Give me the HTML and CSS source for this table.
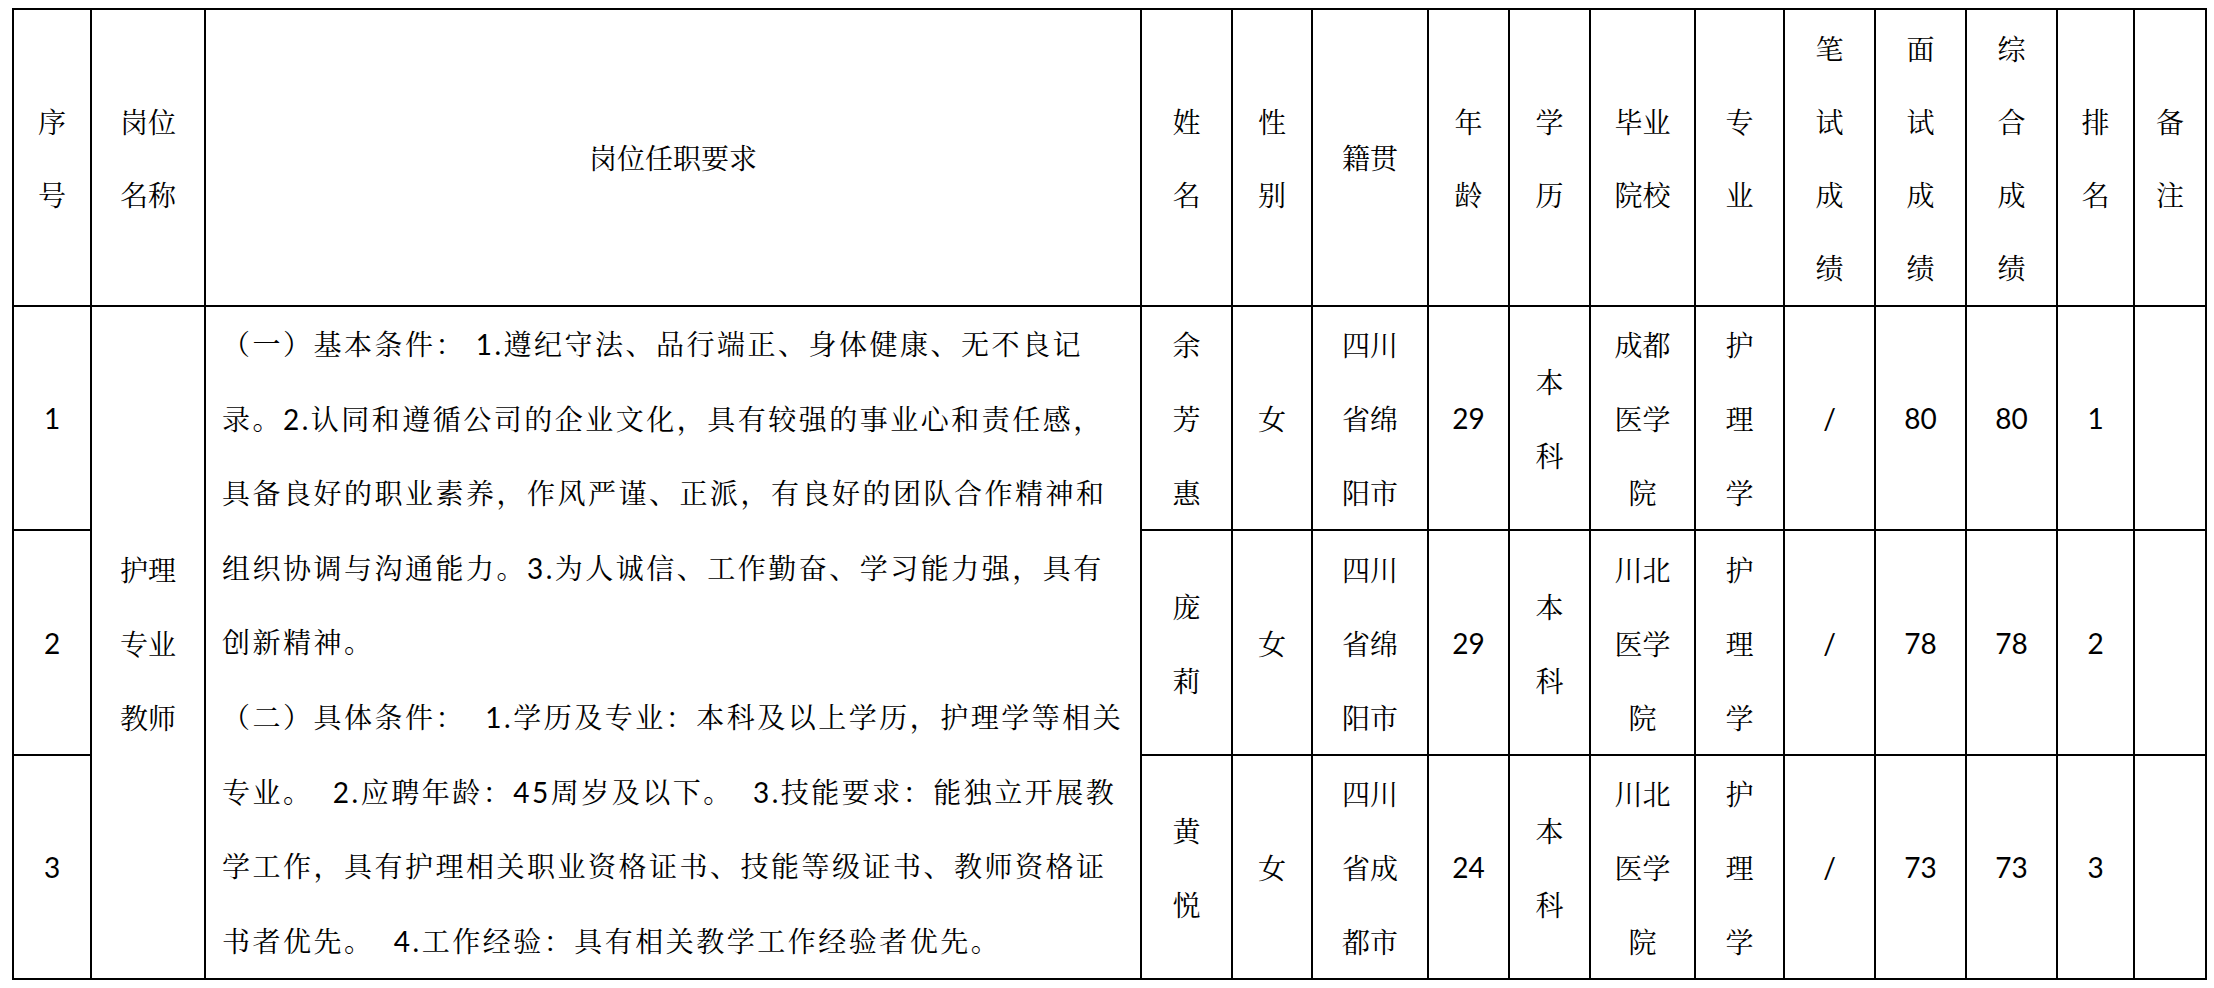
FILE: index.html
```html
<!DOCTYPE html>
<html lang="zh-CN">
<head>
<meta charset="utf-8">
<title>岗位任职要求</title>
<link rel="stylesheet" href="styles.css">
</head>
<body>
<div class="wrap">
<table class="grid">
  <colgroup>
    <col class="w1"><col class="w2"><col class="w3"><col class="w4"><col class="w5">
    <col class="w6"><col class="w7"><col class="w8"><col class="w9"><col class="w10">
    <col class="w11"><col class="w12"><col class="w13"><col class="w14"><col class="w15">
  </colgroup>
  <tr class="head">
    <td>序<br>号</td>
    <td>岗位<br>名称</td>
    <td>岗位任职要求</td>
    <td>姓<br>名</td>
    <td>性<br>别</td>
    <td>籍贯</td>
    <td>年<br>龄</td>
    <td>学<br>历</td>
    <td>毕业<br>院校</td>
    <td>专<br>业</td>
    <td>笔<br>试<br>成<br>绩</td>
    <td>面<br>试<br>成<br>绩</td>
    <td>综<br>合<br>成<br>绩</td>
    <td>排<br>名</td>
    <td>备<br>注</td>
  </tr>
  <tr class="row">
    <td class="num">1</td>
    <td rowspan="3">护理<br>专业<br>教师</td>
    <td rowspan="3" class="req"><span class="ln">（一）基本条件： 1.遵纪守法、品行端正、身体健康、无不良记</span><span class="ln">录。2.认同和遵循公司的企业文化，具有较强的事业心和责任感，</span><span class="ln">具备良好的职业素养，作风严谨、正派，有良好的团队合作精神和</span><span class="ln">组织协调与沟通能力。3.为人诚信、工作勤奋、学习能力强，具有</span><span class="ln">创新精神。</span><span class="ln">（二）具体条件：  1.学历及专业：本科及以上学历，护理学等相关</span><span class="ln">专业。  2.应聘年龄：45周岁及以下。  3.技能要求：能独立开展教</span><span class="ln">学工作，具有护理相关职业资格证书、技能等级证书、教师资格证</span><span class="ln">书者优先。  4.工作经验：具有相关教学工作经验者优先。</span></td>
    <td>余<br>芳<br>惠</td>
    <td>女</td>
    <td>四川<br>省绵<br>阳市</td>
    <td class="num">29</td>
    <td>本<br>科</td>
    <td>成都<br>医学<br>院</td>
    <td>护<br>理<br>学</td>
    <td class="num">/</td>
    <td class="num">80</td>
    <td class="num">80</td>
    <td class="num">1</td>
    <td></td>
  </tr>
  <tr class="row">
    <td class="num">2</td>
    <td>庞<br>莉</td>
    <td>女</td>
    <td>四川<br>省绵<br>阳市</td>
    <td class="num">29</td>
    <td>本<br>科</td>
    <td>川北<br>医学<br>院</td>
    <td>护<br>理<br>学</td>
    <td class="num">/</td>
    <td class="num">78</td>
    <td class="num">78</td>
    <td class="num">2</td>
    <td></td>
  </tr>
  <tr class="row">
    <td class="num">3</td>
    <td>黄<br>悦</td>
    <td>女</td>
    <td>四川<br>省成<br>都市</td>
    <td class="num">24</td>
    <td>本<br>科</td>
    <td>川北<br>医学<br>院</td>
    <td>护<br>理<br>学</td>
    <td class="num">/</td>
    <td class="num">73</td>
    <td class="num">73</td>
    <td class="num">3</td>
    <td></td>
  </tr>
</table>
</div>
</body>
</html>
```

FILE: styles.css
```css
html, body {
  margin: 0;
  padding: 0;
  background: #ffffff;
}

.wrap {
  padding: 8px 0 0 12px;
}

.grid {
  border-collapse: collapse;
  table-layout: fixed;
  width: 2195px;
  color: #000000;
  font-family: "Noto Serif CJK SC", "Noto Sans CJK SC", serif;
  font-size: 28px;
  border: 2px solid #000000;
}

.grid td {
  border: 2px solid #000000;
  padding: 0;
  text-align: center;
  vertical-align: middle;
  line-height: 74px;
  overflow: hidden;
}

.head td {
  line-height: 73px;
}

.head {
  height: 297px;
}

.row {
  height: 224px;
}

.grid td.num {
  font-family: Lato, "Noto Sans CJK SC", sans-serif;
}

.grid td.req {
  text-align: left;
  padding-left: 16px;
  line-height: 74.6px;
  letter-spacing: 2.5px;
  font-family: Lato, "Noto Serif CJK SC", "Noto Sans CJK SC", sans-serif;
}

.ln {
  display: block;
  white-space: pre;
}

.w1 { width: 78px; }
.w2 { width: 114px; }
.w3 { width: 936px; }
.w4 { width: 91px; }
.w5 { width: 80px; }
.w6 { width: 116px; }
.w7 { width: 81px; }
.w8 { width: 81px; }
.w9 { width: 105px; }
.w10 { width: 89px; }
.w11 { width: 91px; }
.w12 { width: 91px; }
.w13 { width: 91px; }
.w14 { width: 77px; }
.w15 { width: 72px; }
```
